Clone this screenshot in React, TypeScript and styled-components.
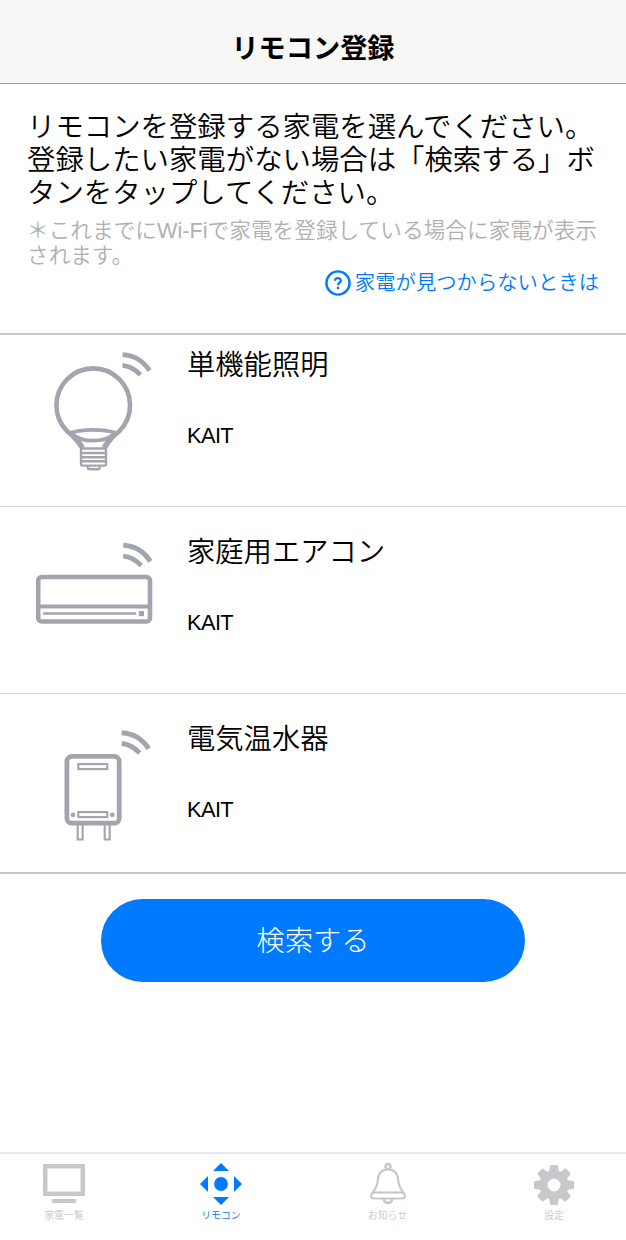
import React from "react";
import styled, { createGlobalStyle } from "styled-components";

const BLUE = "#007aff";
const GRAY = "#a2a5ad";
const MUTED = "#c7c7cc";

const GlobalStyle = createGlobalStyle`
  * { box-sizing: border-box; }
  body {
    margin: 0;
    background: #fff;
    color: #000;
    font-family: "Liberation Sans", "Noto Sans CJK JP", sans-serif;
    font-weight: 350;
  }
`;

const Screen = styled.div`
  display: flex;
  flex-direction: column;
  width: 626px;
  height: 1240px;
  overflow: hidden;
`;

const Header = styled.header`
  display: flex;
  align-items: center;
  justify-content: center;
  height: 84px;
  padding-top: 14px;
  background: #f7f7f5;
  border-bottom: 1px solid #a0a0a0;
`;

const Title = styled.h1`
  margin: 0;
  font-size: 27.2px;
  line-height: 40px;
  font-weight: 700;
  white-space: nowrap;
`;

const Intro = styled.section`
  display: flex;
  flex-direction: column;
  height: 251px;
  padding: 27px 27px 0 27px;
  border-bottom: 2px solid #c8c8c8;
`;

const Lead = styled.p`
  margin: 0;
  font-size: 28.4px;
  line-height: 33px;
  white-space: nowrap;
`;

const Note = styled.p`
  margin: 8px 0 0;
  color: #b0b0b0;
  font-size: 21.68px;
  line-height: 25px;
  white-space: nowrap;
`;

const HelpLink = styled.a`
  display: flex;
  align-items: center;
  align-self: flex-end;
  gap: 4px;
  margin-top: 1px;
  color: ${BLUE};
  font-size: 20.35px;
  line-height: 28px;
  white-space: nowrap;
`;

const List = styled.ul`
  height: 539px;
  margin: 0;
  padding: 0;
  list-style: none;
  overflow: hidden;
  border-bottom: 2px solid #c8c8c8;
`;

const Item = styled.li`
  display: flex;
  height: 187px;
  border-bottom: 1px solid #d8d8d8;
  &:first-child { margin-top: -15px; }
`;

const ItemText = styled.div`
  display: flex;
  flex-direction: column;
  padding-top: 25px;
`;

const ItemName = styled.div`
  font-size: 28.3px;
  line-height: 40px;
`;

const Maker = styled.div`
  margin-top: 35px;
  font-size: 21.8px;
  line-height: 32px;
  letter-spacing: -0.6px;
`;

const SearchButton = styled.button`
  align-self: center;
  width: 424px;
  height: 83px;
  margin-top: 25px;
  padding: 0 0 5px;
  border: 0;
  border-radius: 42px;
  background: ${BLUE};
  color: #fff;
  font: inherit;
  font-weight: 300;
  font-size: 28.3px;
`;

const TabBar = styled.nav`
  display: grid;
  grid-template-columns: 128px 186px 147px 165px;
  height: 88px;
  margin-top: auto;
  border-top: 2px solid #e8e8e8;
`;

const Tab = styled.div<{ $active?: boolean; $shift?: number }>`
  display: flex;
  flex-direction: column;
  align-items: center;
  padding: 8px 0 0 ${(p) => p.$shift ?? 0}px;
  color: ${(p) => (p.$active ? BLUE : MUTED)};
  font-size: 9.9px;
  line-height: 14px;
  white-space: nowrap;
  svg { display: block; margin-bottom: 3px; }
`;

const Waves = ({ x, y }: { x: number; y: number }) => (
  <g transform={`translate(${x} ${y})`} strokeWidth="4.900">
    <path d="M0 0C11 .5 20.800 6.500 27 16" />
    <path d="M0 10.800C6.500 11.300 12.800 15 18 20.300" />
  </g>
);

const BulbIcon = () => (
  <svg width="187" height="186" viewBox="0 320 187 186" fill="none" stroke={GRAY}>
    <Waves x={122.500} y={354.600} />
    <path strokeWidth="4.600" d="M82 448C78 441 74 437 67 431A36.800 36.800 0 1 1 119.500 431C112 437 108.500 441 105 448" />
    <path strokeWidth="3.800" d="M71 432.800C83 429 103 429 115.500 432.800C104 443.300 82 443.300 71 432.800Z" />
    <path strokeWidth="3" d="M78 439L83.500 447M108.500 439L103 447" />
    <rect x="81" y="448.500" width="25" height="17.100" rx="1.500" strokeWidth="2.400" />
    <path strokeWidth="2.400" d="M80 453H107M80 457.200H107M80 461.300H107" />
    <path strokeWidth="2.400" d="M88 466V468Q88 469.300 90 469.300H97.500Q99.500 469.300 99.500 468V466" />
  </svg>
);

const AirConditionerIcon = () => (
  <svg width="187" height="186" viewBox="0 507 187 186" fill="none" stroke={GRAY}>
    <Waves x={123.300} y={545.300} />
    <rect x="38.200" y="577" width="111.800" height="44.500" rx="3.500" strokeWidth="4.600" />
    <path strokeWidth="4" d="M38 606.500H150" />
    <path strokeWidth="2.600" strokeLinecap="round" d="M44 613.500H135" />
    <rect x="138.800" y="611" width="5.200" height="5.200" fill={GRAY} stroke="none" />
  </svg>
);

const WaterHeaterIcon = () => (
  <svg width="187" height="186" viewBox="0 694 187 186" fill="none" stroke={GRAY}>
    <Waves x={121.700} y={732.700} />
    <rect x="66.900" y="756.400" width="52.300" height="66.800" rx="5" strokeWidth="4.800" />
    <rect x="78.300" y="764.100" width="29" height="5" strokeWidth="2.100" />
    <rect x="78.300" y="812.100" width="29" height="5" strokeWidth="2.100" />
    <g fill={GRAY} stroke="none">
      <circle cx="73" cy="814.800" r="2.400" />
      <circle cx="112.300" cy="814.800" r="2.400" />
    </g>
    <path strokeWidth="2.100" d="M77.700 825V839.500H82.600V825M104.700 825V839.500H109.700V825" />
  </svg>
);

const HelpIcon = () => (
  <svg width="26" height="28" viewBox="325 269 26 28" fill="none" stroke={BLUE}>
    <circle cx="338" cy="283" r="11.600" strokeWidth="2.400" />
    <path strokeWidth="2.200" d="M334.900 280.700C335.100 277.300 341 277.400 340.900 280.600C340.800 282.800 338 282.700 338 285.300" />
    <circle cx="338" cy="287.900" r="1.300" fill={BLUE} stroke="none" />
  </svg>
);

const TvIcon = () => (
  <svg width="44" height="44" viewBox="42 1162 44 44" fill="none" stroke="currentColor">
    <rect x="45.200" y="1166.200" width="37.600" height="27.600" strokeWidth="4.500" />
    <path strokeWidth="4" d="M52 1201H76" />
  </svg>
);

const RemoteIcon = () => (
  <svg width="44" height="44" viewBox="199 1162 44 44" fill="currentColor">
    <circle cx="221" cy="1184" r="6.900" />
    <path d="M213 1171L221 1163L229 1171ZM213 1197L221 1205L229 1197ZM208 1176L200 1184L208 1192ZM234 1176L242 1184L234 1192Z" />
  </svg>
);

const BellIcon = () => (
  <svg width="44" height="44" viewBox="366 1162 44 44" fill="none" stroke="currentColor" strokeWidth="2.100">
    <circle cx="388" cy="1166.500" r="2.500" strokeWidth="2.400" />
    <path d="M388 1169.500C381 1169.500 378 1174.500 377.700 1181C377.400 1187 374 1190 371.700 1194C370.300 1197 371.500 1198.500 374 1198.500H402C404.500 1198.500 405.700 1197 404.300 1194C402 1190 398.600 1187 398.300 1181C398 1174.500 395 1169.500 388 1169.500Z" />
    <path d="M372.500 1192.500H403.500" />
    <path strokeWidth="2.600" d="M383.800 1199C384.300 1204.300 391.700 1204.300 392.200 1199" />
  </svg>
);

const GearIcon = () => (
  <svg width="44" height="44" viewBox="-22 -23 44 44" fill="currentColor">
    {[0, 45, 90, 135, 180, 225, 270, 315].map((angle) => (
      <path
        key={angle}
        transform={`rotate(${angle})`}
        d="M-5 -12L-4 -19Q-3.800 -20 -3 -20H3Q3.800 -20 4 -19L5 -12Z"
      />
    ))}
    <circle r="10.500" fill="none" stroke="currentColor" strokeWidth="8" />
  </svg>
);

const appliances = [
  { name: "単機能照明", maker: "KAIT", icon: <BulbIcon /> },
  { name: "家庭用エアコン", maker: "KAIT", icon: <AirConditionerIcon /> },
  { name: "電気温水器", maker: "KAIT", icon: <WaterHeaterIcon /> },
];

export default function App() {
  return (
    <Screen>
      <GlobalStyle />
      <Header>
        <Title>リモコン登録</Title>
      </Header>
      <Intro>
        <Lead>
          リモコンを登録する家電を選んでください。
          <br />
          登録したい家電がない場合は「検索する」ボ
          <br />
          タンをタップしてください。
        </Lead>
        <Note>
          ＊これまでにWi-Fiで家電を登録している場合に家電が表示
          <br />
          されます。
        </Note>
        <HelpLink>
          <HelpIcon />
          家電が見つからないときは
        </HelpLink>
      </Intro>
      <List>
        {appliances.map((a) => (
          <Item key={a.name}>
            {a.icon}
            <ItemText>
              <ItemName>{a.name}</ItemName>
              <Maker>{a.maker}</Maker>
            </ItemText>
          </Item>
        ))}
      </List>
      <SearchButton>検索する</SearchButton>
      <TabBar>
        <Tab>
          <TvIcon />
          家電一覧
        </Tab>
        <Tab $active>
          <RemoteIcon />
          リモコン
        </Tab>
        <Tab>
          <BellIcon />
          お知らせ
        </Tab>
        <Tab $shift={21}>
          <GearIcon />
          設定
        </Tab>
      </TabBar>
    </Screen>
  );
}
